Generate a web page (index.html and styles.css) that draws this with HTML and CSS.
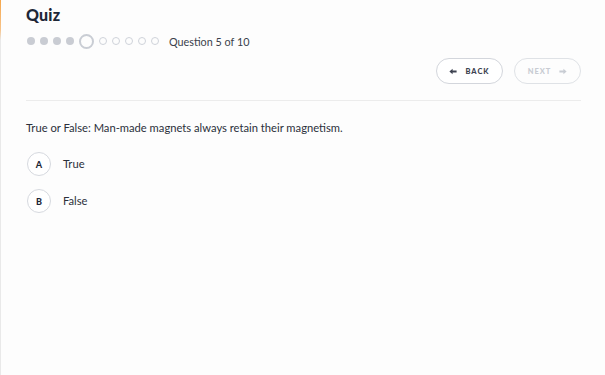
FILE: index.html
```html
<!DOCTYPE html>
<html>
<head>
<meta charset="utf-8">
<link rel="stylesheet" href="styles.css">
</head>
<body>
<div class="edge"></div>
<main class="quiz">
  <h1 class="title">Quiz</h1>
  <div class="progress">
    <div class="dots">
      <span class="dot done"></span>
      <span class="dot done"></span>
      <span class="dot done"></span>
      <span class="dot done"></span>
      <span class="dot current"></span>
      <span class="dot"></span>
      <span class="dot"></span>
      <span class="dot"></span>
      <span class="dot"></span>
      <span class="dot"></span>
    </div>
    <span class="count">Question 5 of 10</span>
  </div>
  <div class="nav">
    <button class="btn">
      <svg class="arrow" viewBox="0 0 10 8" width="8" height="7"><path d="M0.5 4 L4.5 0.5 V2.8 H9.5 V5.2 H4.5 V7.5 Z" fill="currentColor"/></svg>
      BACK
    </button>
    <button class="btn disabled">
      NEXT
      <svg class="arrow" viewBox="0 0 10 8" width="8" height="7"><path d="M9.5 4 L5.5 0.5 V2.8 H0.5 V5.2 H5.5 V7.5 Z" fill="currentColor"/></svg>
    </button>
  </div>
  <hr class="divider">
  <p class="question">True or False: Man-made magnets always retain their magnetism.</p>
  <ul class="options">
    <li class="option"><span class="key">A</span><span class="label">True</span></li>
    <li class="option"><span class="key">B</span><span class="label">False</span></li>
  </ul>
</main>
</body>
</html>
```

FILE: styles.css
```css
html, body {
  margin: 0;
  padding: 0;
  background: #fdfdfd;
  height: 100%;
}
body {
  font-family: Lato, "Open Sans", sans-serif;
  color: #2b303b;
  position: relative;
}
.edge {
  position: absolute;
  left: 0;
  top: 0;
  bottom: 0;
  width: 1px;
  background: linear-gradient(#f6a64a 0px, #f7c48c 30px, #e9e9e9 40px, #e9e9e9 100%);
}
.quiz {
  padding: 5px 24px 0 26px;
}
.title {
  margin: 0;
  font-size: 16px;
  line-height: 20px;
  font-weight: 900;
  color: #1e2737;
  letter-spacing: 0.2px;
}
.progress {
  display: flex;
  align-items: center;
  height: 16px;
  margin-top: 8px;
}
.dots {
  display: flex;
  align-items: center;
  gap: 5px;
  margin-left: 1px;
  margin-right: 10px;
}
.dot {
  width: 6px;
  height: 6px;
  border-radius: 50%;
  border: 1px solid #cfd3da;
  background: transparent;
}
.dot.done {
  width: 8px;
  height: 8px;
  border: none;
  background: #c9ccd3;
}
.dot.current {
  width: 11px;
  height: 11px;
  border: 2px solid #c9cdd4;
}
.count {
  font-size: 10.8px;
  color: #3a3f4b;
}
.nav {
  display: flex;
  justify-content: flex-end;
  gap: 11px;
  margin-top: 9px;
}
.btn {
  display: flex;
  align-items: center;
  justify-content: center;
  gap: 8px;
  width: 67px;
  height: 26px;
  border: 1px solid #d3d6dc;
  border-radius: 13px;
  background: #fff;
  font-family: Lato, sans-serif;
  font-size: 7.5px;
  font-weight: 900;
  letter-spacing: 1px;
  color: #3d4250;
  padding: 0;
}
.btn.disabled {
  color: #c8ccd3;
  border-color: #dfe2e6;
  background: #fdfdfd;
}
.arrow {
  display: block;
}
.divider {
  border: none;
  border-top: 1px solid #ececec;
  margin: 16px 0 0 0;
}
.question {
  margin: 19px 0 0 0;
  font-size: 11.2px;
  line-height: 16px;
  color: #2b303b;
}
.options {
  list-style: none;
  margin: 16px 0 0 0;
  padding: 0 0 0 1px;
  display: flex;
  flex-direction: column;
  gap: 13px;
}
.option {
  display: flex;
  align-items: center;
  gap: 12px;
}
.key {
  width: 22px;
  height: 22px;
  border: 1px solid #d6d9df;
  border-radius: 50%;
  background: #fff;
  display: flex;
  align-items: center;
  justify-content: center;
  font-size: 9px;
  font-weight: 900;
  color: #1e2737;
}
.label {
  font-size: 11.2px;
  color: #2b303b;
  margin-top: -2px;
}
```
